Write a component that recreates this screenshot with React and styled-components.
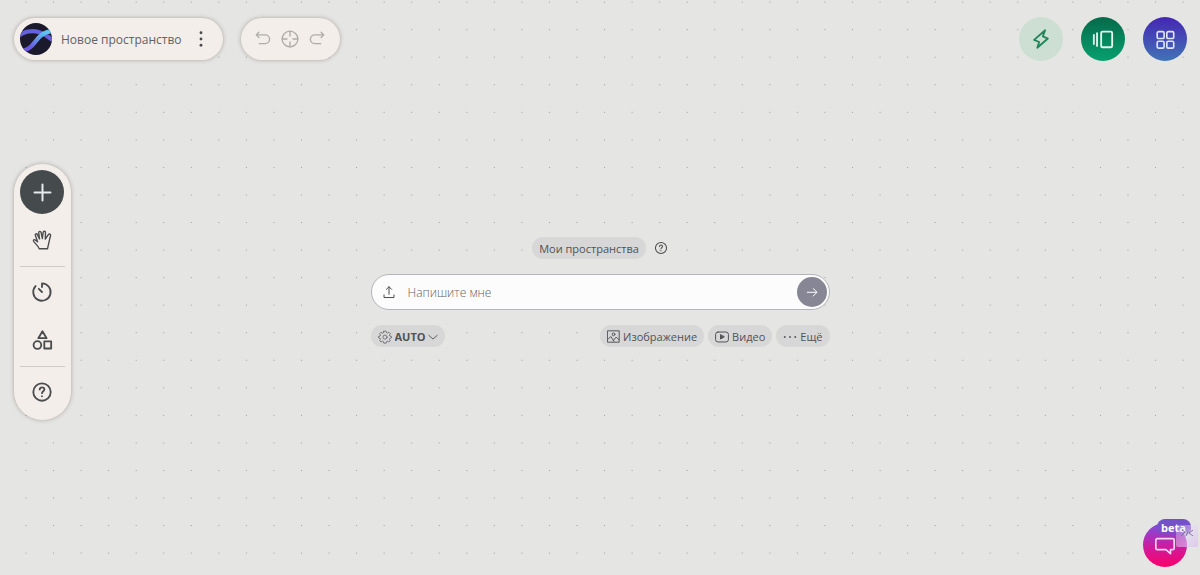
import React, { useState } from "react";
import styled, { createGlobalStyle, css } from "styled-components";

const GlobalStyle = createGlobalStyle`
  *, *::before, *::after { box-sizing: border-box; }
  body {
    margin: 0;
    background: #e5e5e3;
    color: #5a5a5c;
    font-family: "Open Sans", "Noto Sans", sans-serif;
  }
  button, input, select { font: inherit; color: inherit; }
  button { cursor: pointer; }
`;

const Page = styled.div`
  position: relative;
  isolation: isolate;
  display: flex;
  flex-direction: column;
  min-height: 100vh;
`;

const Dots = styled.svg`
  position: absolute;
  inset: 0;
  z-index: -1;
  width: 100%;
  height: 100%;
`;

const Header = styled.header`
  display: flex;
  justify-content: space-between;
  align-items: center;
  padding: 17px 13px 0 14px;
`;

const HeaderGroup = styled.div`
  display: flex;
  align-items: center;
  gap: 18px;
`;

const surface = css`
  background: #f3eee9;
  box-shadow: 0 0 4px rgba(60, 50, 40, 0.35);
`;

const Bar = styled.div`
  ${surface}
  display: flex;
  align-items: center;
  height: 42px;
  padding: ${(p) => p.$pad};
  border-radius: 21px;
`;

const SpaceName = styled.h1`
  margin: 0 7px 0 9px;
  padding-top: 2px;
  font-size: 12px;
  line-height: 20px;
  font-weight: 400;
  color: #626264;
  white-space: nowrap;
`;

const IconButton = styled.button`
  display: grid;
  place-items: center;
  flex: none;
  width: ${(p) => p.$size || 27}px;
  height: ${(p) => p.$size || 27}px;
  padding: 0;
  border: 0;
  border-radius: 50%;
  background: ${(p) => p.$bg || "transparent"};
  color: ${(p) => p.$color || "#4a4c4e"};
`;

const Workspace = styled.main`
  flex: 1;
  display: grid;
  grid-template-columns: 1fr minmax(0, 459px) 1fr;
  align-items: center;
  padding: 0 14px;
`;

const Tools = styled.nav`
  ${surface}
  justify-self: start;
  display: flex;
  flex-direction: column;
  gap: 4px;
  width: 57px;
  padding: 6px;
  border-radius: 29px;
`;

const Divider = styled.hr`
  width: 100%;
  height: 1px;
  margin: 0 0 -1px;
  border: 0;
  background: #cfcbc7;
`;

const Composer = styled.section`
  display: flex;
  flex-direction: column;
  gap: 15px;
`;

const Row = styled.div`
  display: flex;
  align-items: center;
  justify-content: ${(p) => p.$justify};
  gap: ${(p) => p.$gap || 4}px;
`;

const pill = css`
  display: inline-flex;
  align-items: center;
  gap: 3px;
  height: 22px;
  padding: 1px 7px 0;
  border: 0;
  border-radius: 11px;
  background: #d7d7d7;
  color: #505255;
  font-size: 11px;
  line-height: 16px;
  font-weight: 500;
  white-space: nowrap;
`;

const Pill = styled.button`
  ${pill}
`;

const ModelPicker = styled.label`
  ${pill}
`;

const ModelSelect = styled.select`
  appearance: none;
  margin-right: -2px;
  padding: 0;
  border: 0;
  background: transparent;
  font-weight: 700;
`;

const Prompt = styled.form`
  display: flex;
  align-items: center;
  gap: 5px;
  height: 36px;
  padding: 0 2px 0 4px;
  border: 1px solid #b4b4ba;
  border-radius: 18px;
  background: #fcfcfc;
`;

const PromptInput = styled.input`
  flex: 1;
  min-width: 0;
  padding: 2px 0 0;
  border: 0;
  outline: 0;
  background: transparent;
  font-size: 12px;
  line-height: 18px;
  font-weight: 300;
  &::placeholder { color: #626266; opacity: 1; }
`;

const Footer = styled.footer`
  display: flex;
  justify-content: flex-end;
  padding: 0 13px 8px;
`;

const Chat = styled.div`
  position: relative;
`;

const Beta = styled.span`
  position: absolute;
  top: -4px;
  right: -4px;
  height: 18px;
  padding: 0 5px 0 4px;
  border-radius: 8px;
  background: linear-gradient(#7152c8, #7a4fc8 60%, transparent);
  color: #fff;
  font-size: 11px;
  line-height: 18px;
  font-weight: 700;
  pointer-events: none;
`;

const Handle = styled.svg`
  position: absolute;
  top: 2px;
  right: -11px;
  pointer-events: none;
`;

function Icon({ size = 22, width = 1.5, box = 24, children }) {
  return (
    <svg
      width={size}
      height={size}
      viewBox={`0 0 ${box} ${box}`}
      fill="none"
      stroke="currentColor"
      strokeWidth={width}
      strokeLinecap="round"
      strokeLinejoin="round"
      aria-hidden="true"
    >
      {children}
    </svg>
  );
}

function Logo() {
  return (
    <svg width="32" height="32" viewBox="0 0 32 32" aria-hidden="true">
      <defs>
        <clipPath id="logo-clip"><circle cx="16" cy="16" r="16" /></clipPath>
        <linearGradient id="logo-a" x1="0" y1="1" x2="1" y2="0">
          <stop offset="0.2" stopColor="#6a58e0" />
          <stop offset="0.8" stopColor="#5cc4f0" />
        </linearGradient>
      </defs>
      <g clipPath="url(#logo-clip)" fill="none">
        <rect width="32" height="32" fill="#1b1a2c" />
        <path d="M-1 12.500C6 7.500 14 7.500 20 9.500s8 3.500 13 8" stroke="#6461dc" strokeWidth="4" />
        <path d="M3 27.500C16 26 15 9 33 8" stroke="url(#logo-a)" strokeWidth="4.2" />
      </g>
    </svg>
  );
}

const helpPaths = (
  <>
    <circle cx="12" cy="12" r="9.5" />
    <path d="M9.500 9.400c0-1.500 1.100-2.400 2.500-2.400s2.600.9 2.600 2.300c0 1.900-2.600 2-2.600 4" />
    <path d="M12 16.500v.2" />
  </>
);

export default function App() {
  const [text, setText] = useState("");
  return (
    <>
      <GlobalStyle />
      <Page>
        <Dots aria-hidden="true">
          <defs>
            <pattern id="dots" x="25.5" y="1.6" width="27.55" height="27.55" patternUnits="userSpaceOnUse">
              <rect width="1" height="1" fill="#9c9c9c" />
            </pattern>
          </defs>
          <rect width="100%" height="100%" fill="url(#dots)" />
        </Dots>

        <Header>
          <HeaderGroup>
            <Bar $pad="0 10px 0 6px">
              <Logo />
              <SpaceName>Новое пространство</SpaceName>
              <IconButton aria-label="Меню пространства" $size={24}>
                <Icon size={20}>
                  <g fill="currentColor" stroke="none">
                    <circle cx="12" cy="4.500" r="1.700" />
                    <circle cx="12" cy="12" r="1.700" />
                    <circle cx="12" cy="19.500" r="1.700" />
                  </g>
                </Icon>
              </IconButton>
            </Bar>
            <Bar $pad="0 9px">
              <IconButton aria-label="Отменить" $color="#b0aca9">
                <Icon size={18} width={1.8}><path d="M4 6.500h11a5.800 5.800 0 0 1 0 11.600H7M6.500 3L3 6.500 6.500 10" /></Icon>
              </IconButton>
              <IconButton aria-label="Центрировать" $color="#b0aca9">
                <Icon size={18} width={1.8}><circle cx="12" cy="12" r="10.500" /><path d="M12 1.500V8M12 16v6.500M1.500 12H8M16 12h6.500" /></Icon>
              </IconButton>
              <IconButton aria-label="Повторить" $color="#b0aca9">
                <Icon size={18} width={1.8}><path d="M20 6.500H9a5.800 5.800 0 0 0 0 11.600H17M17.500 3L21 6.500 17.500 10" /></Icon>
              </IconButton>
            </Bar>
          </HeaderGroup>
          <HeaderGroup>
            <IconButton aria-label="Быстрые действия" $size={44} $bg="#cddfd3" $color="#23845a">
              <Icon width={2}><path d="M16.500 2.500L4.500 13l5.500 2.300L8 21.500 19.500 11.500 14 9.200z" /></Icon>
            </IconButton>
            <IconButton aria-label="Слайды" $size={44} $bg="linear-gradient(#066a49, #07a06e)" $color="#e4f6ee">
              <Icon width={2}><path d="M2 7.500v10M5.500 5.500v14" /><rect x="10" y="4" width="12" height="17" rx="1.500" /></Icon>
            </IconButton>
            <IconButton aria-label="Все пространства" $size={44} $bg="linear-gradient(#4526b4, #4173b4)" $color="#dfe4fa">
              <Icon width={1.8}><rect x="3.500" y="4" width="7.500" height="7.500" rx="1.500" /><rect x="14" y="4" width="7.500" height="7.500" rx="1.500" /><rect x="3.500" y="14.500" width="7.500" height="7.500" rx="1.500" /><rect x="14" y="14.500" width="7.500" height="7.500" rx="1.500" /></Icon>
            </IconButton>
          </HeaderGroup>
        </Header>

        <Workspace>
          <Tools aria-label="Инструменты">
            <IconButton aria-label="Добавить" $size={44} $bg="#454a4c" $color="#e6eaec">
              <Icon size={24} width={2}><path d="M12.500 4.500v16M4.500 12.500h16" /></Icon>
            </IconButton>
            <IconButton aria-label="Рука" $size={44}>
              <Icon size={22} width={1.5}>
                <path d="M9 21.500c-.7-2.400-3.400-4.700-5.900-7.700-1.300-1.700.4-2.900 1.800-1.700l2.300 1.800L4.700 6.900c-.5-1.700 1.700-2.400 2.300-.8l2.300 4.800L8.400 4c-.2-1.700 2.200-2 2.600-.3l1.400 6.700.8-6.800c.3-1.600 2.700-1.400 2.600.3l-.2 7.200 3.300-5c.9-1.400 2.900-.4 2.400 1.200-1.300 4.500-2 9.200-3.300 14.200z" />
              </Icon>
            </IconButton>
            <Divider />
            <IconButton aria-label="История" $size={44}>
              <Icon width={2}><path d="M12 6.500V2.500a9.500 9.500 0 1 1-7 3M8.500 8.500l3.500 3.500" /></Icon>
            </IconButton>
            <IconButton aria-label="Фигуры" $size={44}>
              <Icon width={2}><path d="M12.500 2.500L17 10H8z" /><circle cx="7" cy="17.500" r="4.200" /><rect x="14.500" y="13.500" width="7.500" height="7.800" /></Icon>
            </IconButton>
            <Divider />
            <IconButton aria-label="Помощь" $size={44}>
              <Icon width={2}>{helpPaths}</Icon>
            </IconButton>
          </Tools>

          <Composer>
            <Row $justify="center" $gap={8}>
              <Pill>Мои пространства</Pill>
              <IconButton aria-label="Справка" $size={14}>
                <Icon size={14} width={1.8}>{helpPaths}</Icon>
              </IconButton>
            </Row>
            <Prompt onSubmit={(e) => e.preventDefault()}>
              <IconButton type="button" aria-label="Загрузить файл">
                <Icon size={14} width={1.7}><path d="M12 16V3M7.500 7.500L12 3l4.500 4.500M3.500 17v4.500h17V17" /></Icon>
              </IconButton>
              <PromptInput
                aria-label="Сообщение"
                placeholder="Напишите мне"
                value={text}
                onChange={(e) => setText(e.target.value)}
              />
              <IconButton type="submit" aria-label="Отправить" $size={30} $bg="#878694" $color="#fff">
                <Icon size={14} width={1.7}><path d="M4 12.500h16M14 6l6.500 6.500L14 19" /></Icon>
              </IconButton>
            </Prompt>
            <Row $justify="space-between">
              <ModelPicker>
                <Icon size={14} width={1.2}>
                  <path d="M10 2h4l.6 2.500 1.900.8 2.300-1.400 2.300 2.300-1.400 2.300.8 1.900L23 11v2.500l-2.500.6-.8 1.900 1.400 2.300-2.300 2.300-2.300-1.400-1.900.8L14 22.500h-4l-.6-2.500-1.900-.8-2.300 1.400-2.300-2.300L4.300 16l-.8-1.900L1 13.500V11l2.500-.6.800-1.900-1.400-2.300 2.300-2.300 2.300 1.400 1.900-.8z" />
                  <circle cx="12" cy="12.200" r="3.500" />
                </Icon>
                <ModelSelect aria-label="Модель" defaultValue="auto">
                  <option value="auto">AUTO</option>
                </ModelSelect>
                <Icon size={10} width={2.2}><path d="M2 8l10 9L22 8" /></Icon>
              </ModelPicker>
              <Row>
                <Pill>
                  <Icon size={13} width={1.8}><rect x="1.500" y="1.500" width="21" height="21" /><circle cx="12" cy="8" r="2.500" /><path d="M2 17l5-5 6 9M12 19l5-6 5 5" /></Icon>
                  Изображение
                </Pill>
                <Pill>
                  <Icon size={14} width={1.7}><rect x="1" y="3.500" width="22" height="17" rx="4" /><path fill="currentColor" d="M9.500 8.500v7l6-3.500z" /></Icon>
                  Видео
                </Pill>
                <Pill>
                  <Icon size={14}><g fill="currentColor" stroke="none"><circle cx="3" cy="12" r="1.600" /><circle cx="12" cy="12" r="1.600" /><circle cx="21" cy="12" r="1.600" /></g></Icon>
                  Ещё
                </Pill>
              </Row>
            </Row>
          </Composer>
        </Workspace>

        <Footer>
          <Chat>
            <IconButton aria-label="Открыть чат" $size={44} $bg="linear-gradient(#7652e0, #c81fa4 50%, #fb0068)" $color="#f7d9f2">
              <Icon width={1.8}><path d="M3.500 5h17A1.500 1.500 0 0 1 22 6.500v9a1.500 1.500 0 0 1-1.500 1.500H18v4.500L13 17H3.500A1.500 1.500 0 0 1 2 15.500v-9A1.500 1.500 0 0 1 3.500 5z" /></Icon>
            </IconButton>
            <Beta>beta</Beta>
            <Handle width="22" height="22" viewBox="0 0 22 22" aria-hidden="true">
              <defs>
                <linearGradient id="handle" x1="0" y1="0" x2="1" y2="1">
                  <stop offset="0" stopColor="#f0eaf8" stopOpacity="0.25" />
                  <stop offset="1" stopColor="#d9bdf2" stopOpacity="0.75" />
                </linearGradient>
              </defs>
              <rect width="22" height="22" rx="2" fill="url(#handle)" />
              <path d="M6 5l3 2-4 4M12 6l-2 5M17 5l-4 3 4 3" fill="none" stroke="#6c6486" strokeOpacity="0.8" />
            </Handle>
          </Chat>
        </Footer>
      </Page>
    </>
  );
}
